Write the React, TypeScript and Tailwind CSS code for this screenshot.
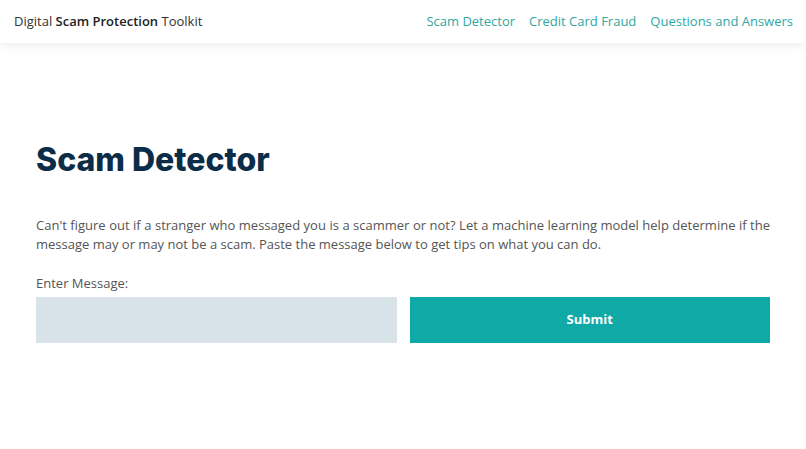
import * as React from "react"

const navLinks = ["Scam Detector", "Credit Card Fraud", "Questions and Answers"]

export default function App() {
  const [message, setMessage] = React.useState("")

  return (
    <div className="min-h-screen bg-white font-['Open_Sans',sans-serif]">
      {/* Header */}
      <header className="flex h-[43px] items-center justify-between bg-white pl-[14px] pr-[13px] shadow-[0_2px_10px_rgba(0,0,0,0.08)]">
        <div className="text-[13px] text-[#333]">
          Digital <span className="font-semibold text-[#222]">Scam Protection</span> Toolkit
        </div>
        <nav className="flex gap-[14px]">
          {navLinks.map((link) => (
            <a key={link} href="#" className="text-[13px] text-[#2fa89f]">
              {link}
            </a>
          ))}
        </nav>
      </header>

      {/* Main */}
      <main className="px-[36px] pt-[97px]">
        <h1 className="font-['Inter',sans-serif] text-[32px] font-extrabold leading-[40px] text-[#0c2d48]">
          Scam Detector
        </h1>
        <p className="mt-[36px] max-w-[734px] text-justify text-[13px] leading-[19px] text-[#555]">
          Can't figure out if a stranger who messaged you is a scammer or not? Let a machine learning model help
          determine if the message may or may not be a scam. Paste the message below to get tips on what you can do.
        </p>
        <form className="mt-[19px] max-w-[734px]" onSubmit={(e) => e.preventDefault()}>
          <label className="block text-[13px] leading-[20px] text-[#555]">Enter Message:</label>
          <div className="mt-[4px] grid grid-cols-2 gap-[13px]">
            <input
              value={message}
              onChange={(e) => setMessage(e.target.value)}
              className="h-[46px] bg-[#d7e2e9] px-3 text-[13px] outline-none"
            />
            <button type="submit" className="h-[46px] bg-[#0fa9a7] text-[13px] font-bold text-white">
              Submit
            </button>
          </div>
        </form>
      </main>
    </div>
  )
}
